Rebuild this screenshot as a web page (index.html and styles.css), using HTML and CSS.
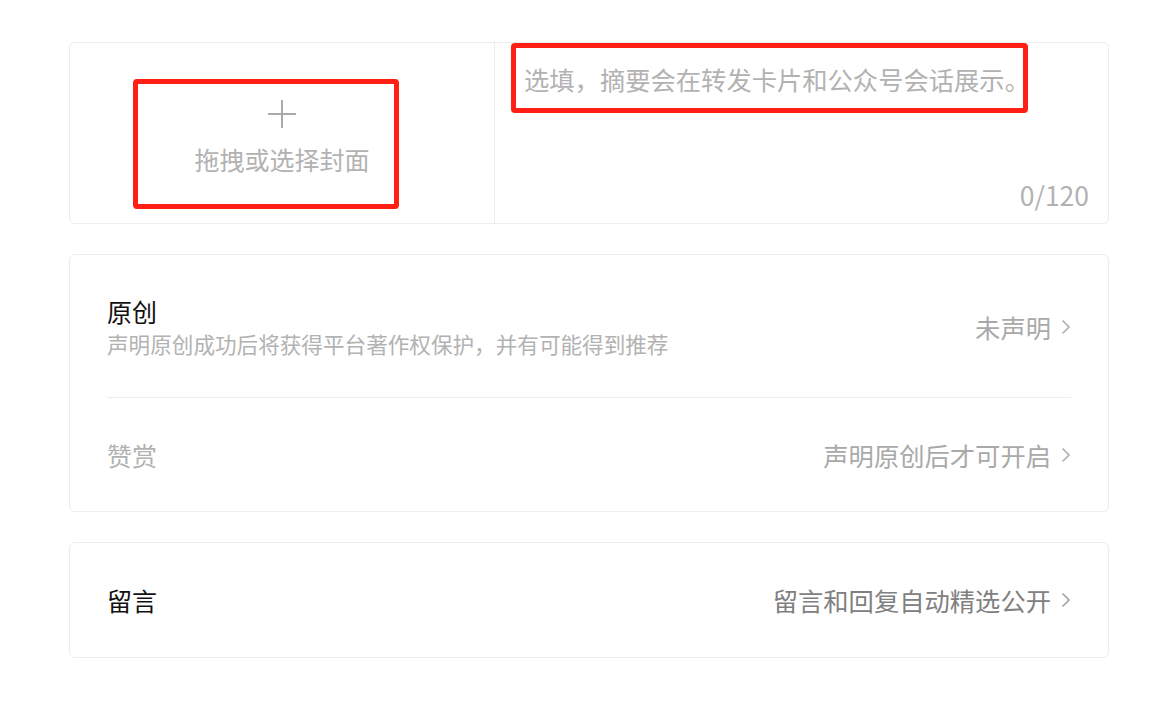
FILE: index.html
```html
<!DOCTYPE html>
<html lang="zh-CN">
<head>
<meta charset="utf-8">
<title>发表设置</title>
<link rel="stylesheet" href="styles.css">
</head>
<body>
<div class="page">
  <div class="card cover-card">
    <div class="cover">
      <div class="cover-inner">
        <svg class="plus" width="28" height="28" viewBox="0 0 28 28"><path d="M14 0V28M0 14H28" stroke="#aaaaaa" stroke-width="2" fill="none"/></svg>
        <div class="cover-text">拖拽或选择封面</div>
      </div>
      <div class="mark mark-cover"></div>
    </div>
    <div class="digest">
      <div class="placeholder">选填，摘要会在转发卡片和公众号会话展示。</div>
      <div class="count">0/120</div>
      <div class="mark mark-digest"></div>
    </div>
  </div>

  <div class="card">
    <div class="row row-tall">
      <div class="row-main">
        <div class="title">原创</div>
        <div class="desc">声明原创成功后将获得平台著作权保护，并有可能得到推荐</div>
      </div>
      <div class="value">未声明<svg class="chev" width="10" height="16" viewBox="0 0 10 16"><path d="M1.5 1.5L8 8L1.5 14.5" stroke="#b0b0b0" stroke-width="1.6" fill="none"/></svg></div>
    </div>
    <div class="row row-sep">
      <div class="row-main">
        <div class="title disabled">赞赏</div>
      </div>
      <div class="value">声明原创后才可开启<svg class="chev" width="10" height="16" viewBox="0 0 10 16"><path d="M1.5 1.5L8 8L1.5 14.5" stroke="#b0b0b0" stroke-width="1.6" fill="none"/></svg></div>
    </div>
  </div>

  <div class="card">
    <div class="row">
      <div class="row-main">
        <div class="title">留言</div>
      </div>
      <div class="value dark">留言和回复自动精选公开<svg class="chev" width="10" height="16" viewBox="0 0 10 16"><path d="M1.5 1.5L8 8L1.5 14.5" stroke="#a0a0a0" stroke-width="1.6" fill="none"/></svg></div>
    </div>
  </div>
</div>
</body>
</html>
```

FILE: styles.css
```css
* { box-sizing: border-box; }
html, body { margin: 0; padding: 0; background: #ffffff; }
body {
  font-family: "Noto Sans CJK SC", "Noto Sans", sans-serif;
  color: #1a1a1a;
}
.page {
  width: 1040px;
  margin: 42px 0 0 69px;
  display: flex;
  flex-direction: column;
  gap: 30px;
}
.card {
  border: 1px solid #ececec;
  border-radius: 6px;
  background: #fff;
}
.cover-card {
  display: flex;
  height: 182px;
}
.cover {
  position: relative;
  width: 425px;
  border-right: 1px solid #ececec;
  display: flex;
  justify-content: center;
}
.cover-inner {
  display: flex;
  flex-direction: column;
  align-items: center;
  padding-top: 57px;
}
.plus { display: block; }
.cover-text {
  margin-top: 16px;
  font-size: 25px;
  line-height: 30px;
  color: #b2b2b2;
}
.digest {
  position: relative;
  flex: 1;
  padding: 19px 19px 13px 29px;
  display: flex;
  flex-direction: column;
  justify-content: space-between;
}
.placeholder {
  font-size: 25.3px;
  line-height: 34px;
  color: #b2b2b2;
}
.count {
  align-self: flex-end;
  font-size: 26.5px;
  line-height: 30px;
  color: #b2b2b2;
}
.mark {
  position: absolute;
  border: 5px solid #ff1f14;
  border-radius: 4px;
}
.mark-cover {
  left: 63px;
  top: 36px;
  width: 266px;
  height: 130px;
}
.mark-digest {
  left: 16px;
  top: 0px;
  width: 517px;
  height: 70px;
}
.row {
  display: flex;
  align-items: center;
  justify-content: space-between;
  height: 114px;
  margin: 0 37px;
}
.row-tall { height: 142px; padding-top: 2px; }
.row-sep { border-top: 1px solid #ececec; }
.title {
  font-size: 25px;
  line-height: 32px;
  color: #111;
}
.title.disabled { color: #b2b2b2; }
.desc {
  margin-top: 2px;
  font-size: 21.6px;
  line-height: 30px;
  color: #b2b2b2;
}
.value {
  display: flex;
  align-items: center;
  font-size: 25.3px;
  line-height: 32px;
  color: #a9a9a9;
}
.value.dark { color: #808080; }
.chev { margin-left: 10px; display: block; }
```
